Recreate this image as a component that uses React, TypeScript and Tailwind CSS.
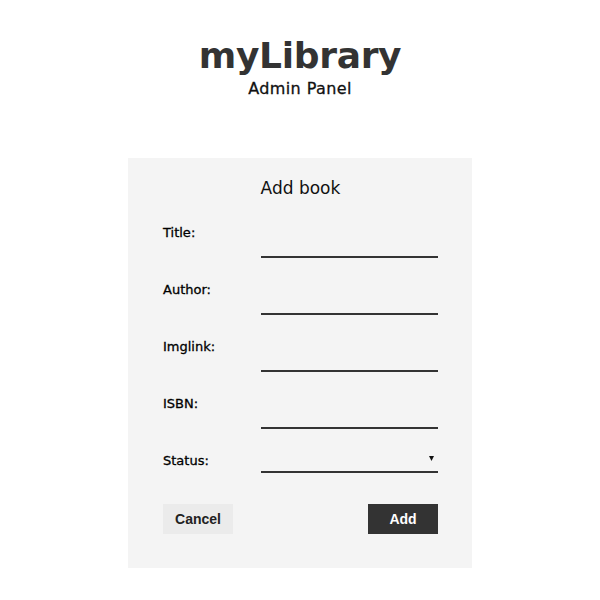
const fields = ['Title', 'Author', 'Imglink', 'ISBN']

const App = () => {
  return (
    <div className="min-h-[600px] bg-white font-['DejaVu_Sans',sans-serif] text-[#111]">
      <header className="flex flex-col items-center pt-[33px]">
        <h1 className="text-[36px] font-bold leading-[46px] tracking-[-0.3px] text-[#333]">
          myLibrary
        </h1>
        <h2 className="mt-[-1px] text-[16px] leading-[22px] tracking-[0.4px] text-[#111] [-webkit-text-stroke:0.3px_#111]">
          Admin Panel
        </h2>
      </header>
      <div className="mx-auto mt-[58px] flex w-[344px] flex-col bg-[#f4f4f4] pb-[34px] pl-[35px] pr-[34px] pt-[18px]">
        <h3 className="text-center text-[17px] leading-[24px] text-[#111]">
          Add book
        </h3>
        <form className="mt-[23px] flex flex-col gap-[22px]">
          {fields.map((f) => (
            <div key={f} className="flex h-[35px] items-start">
              <label className="w-[98px] shrink-0 text-[13px] leading-[20px] text-black [-webkit-text-stroke:0.3px_#000]">
                {f}:
              </label>
              <input
                type="text"
                className="h-[35px] w-[177px] border-b-2 border-[#333] bg-transparent outline-none"
              />
            </div>
          ))}
          <div className="flex h-[22px] items-start">
            <label className="w-[98px] shrink-0 text-[13px] leading-[20px] text-black [-webkit-text-stroke:0.3px_#000]">
              Status:
            </label>
            <div className="relative h-[22px] w-[177px] border-b-2 border-[#333]">
              <svg
                className="absolute right-[4px] top-[5px]"
                width="5"
                height="5"
                viewBox="0 0 5 5"
              >
                <path d="M0 0h5L2.5 5z" fill="#111" />
              </svg>
            </div>
          </div>
        </form>
        <div className="mt-[31px] flex justify-between font-['Liberation_Sans',sans-serif] text-[14px] font-bold">
          <button className="h-[30px] w-[70px] bg-[#ebebeb] text-[#222]">
            Cancel
          </button>
          <button className="h-[30px] w-[70px] bg-[#333] text-white">
            Add
          </button>
        </div>
      </div>
    </div>
  )
}

export default App
